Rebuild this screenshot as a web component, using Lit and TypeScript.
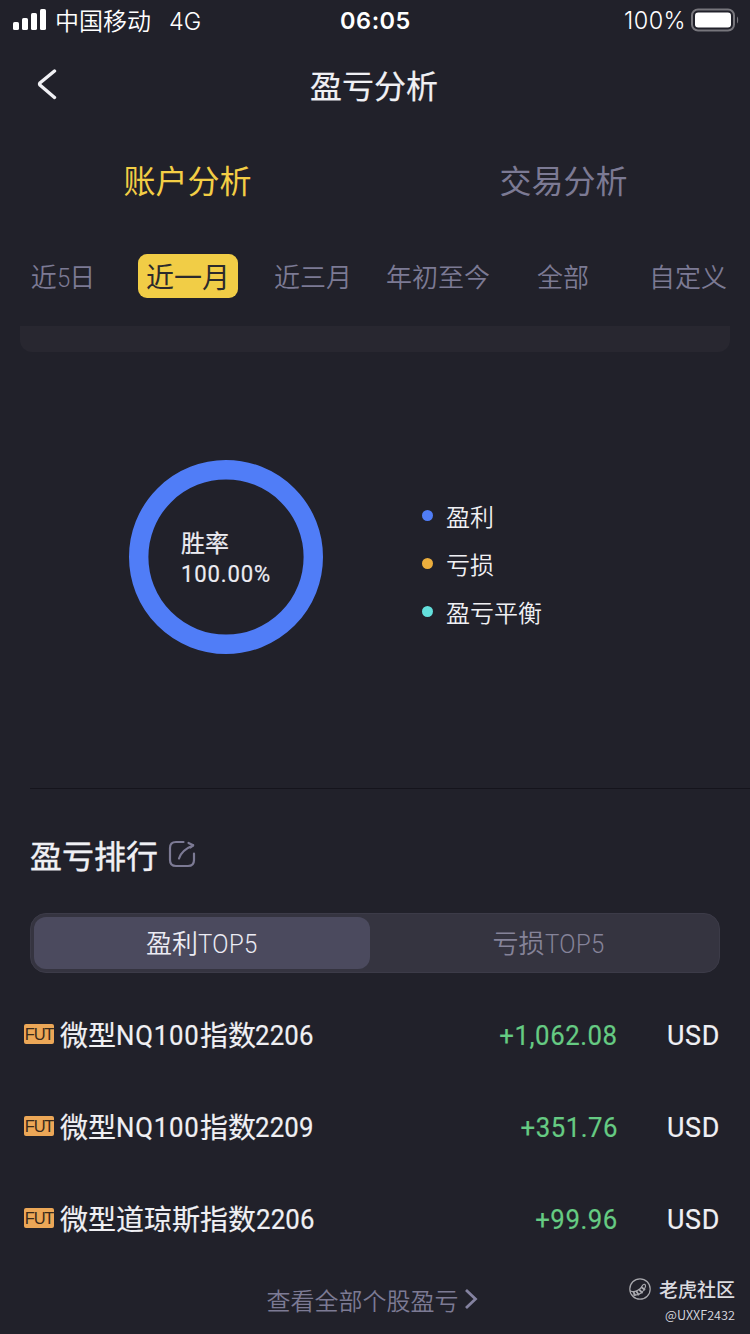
import { LitElement, html, css, svg } from "lit";
import { customElement, property, state } from "lit/decorators.js";
import { classMap } from "lit/directives/class-map.js";

interface Holding {
  name: Array<{ text: string; kind?: "code" | "month" }>;
  profit: string;
  currency: string;
}

const HOLDINGS: Holding[] = [
  {
    name: [{ text: "微型" }, { text: "NQ100", kind: "code" }, { text: "指数" }, { text: "2206", kind: "month" }],
    profit: "+1,062.08",
    currency: "USD",
  },
  {
    name: [{ text: "微型" }, { text: "NQ100", kind: "code" }, { text: "指数" }, { text: "2209", kind: "month" }],
    profit: "+351.76",
    currency: "USD",
  },
  {
    name: [{ text: "微型道琼斯指数" }, { text: "2206", kind: "month" }],
    profit: "+99.96",
    currency: "USD",
  },
];

@customElement("status-bar")
class StatusBar extends LitElement {
  static styles = css`
    :host {
      display: grid;
      grid-template-columns: 1fr auto 1fr;
      grid-template-rows: 40px;
      align-items: center;
      height: 40px;
      padding: 0 11px 0 13px;
      color: #fff;
      font: 400 24px/38px Inter, "Noto Sans CJK SC", sans-serif;
    }
    .left {
      display: flex;
      align-items: center;
    }
    .signal {
      width: 34px;
      height: 22px;
      margin-right: 8px;
    }
    .carrier {
      font-weight: 350;
      padding-top: 3px;
    }
    .network {
      margin-left: 18px;
      font-size: 23.5px;
      font-weight: 350;
      padding-top: 3px;
    }
    .time {
      font-weight: 600;
      font-size: 23.5px;
      letter-spacing: 0.5px;
      padding-top: 2px;
      margin-left: -1px;
    }
    .right {
      display: flex;
      align-items: center;
      justify-content: flex-end;
    }
    .percent {
      font-size: 23.5px;
      font-weight: 350;
      letter-spacing: 0.4px;
      margin-right: 5px;
      padding-top: 2px;
    }
    .battery {
      width: 48px;
      height: 24px;
    }
  `;

  render() {
    return html`
      <div class="left">
        <svg class="signal" viewBox="0 0 34 22" fill="#fff">
          <rect x="0" y="13" width="6" height="8" rx="1.6" />
          <rect x="9" y="9" width="6" height="12" rx="1.6" />
          <rect x="18" y="4" width="6" height="17" rx="1.6" />
          <rect x="27" y="0" width="6" height="21" rx="1.6" />
        </svg>
        <span class="carrier">中国移动</span>
        <span class="network">4G</span>
      </div>
      <span class="time">06:05</span>
      <div class="right">
        <span class="percent">100%</span>
        <svg class="battery" viewBox="0 0 48 24">
          <rect x="1" y="1.5" width="42" height="21" rx="6" fill="none" stroke="#77767c" stroke-width="2" />
          <rect x="4" y="4.5" width="36" height="15" rx="3.2" fill="#fff" />
          <path d="M46 8.5c1.6.9 1.6 6.100 0 7z" fill="#77767c" />
        </svg>
      </div>
    `;
  }
}

@customElement("win-rate-chart")
class WinRateChart extends LitElement {
  @property() label = "";
  @property() value = "";

  static styles = css`
    :host {
      display: grid;
      width: 194px;
      height: 194px;
    }
    .ring,
    .caption {
      grid-area: 1 / 1;
    }
    .caption {
      align-self: center;
      padding-left: 52px;
      color: #ececf2;
      font: 400 24px/30px "Noto Sans CJK SC", sans-serif;
      -webkit-text-stroke: 0.2px currentColor;
    }
    .value {
      padding-top: 2px;
      margin-bottom: -2px;
      font-family: Roboto, sans-serif;
      transform: scaleX(0.92);
      transform-origin: left;
      letter-spacing: 0.95px;
    }
  `;

  render() {
    return html`
      <svg class="ring" viewBox="0 0 194 194">
        ${svg`<circle cx="97" cy="97" r="87.3" fill="none" stroke="#507df7" stroke-width="19.4" />`}
      </svg>
      <div class="caption">
        <div>${this.label}</div>
        <div class="value">${this.value}</div>
      </div>
    `;
  }
}

@customElement("app-root")
class AppRoot extends LitElement {
  @state() private section = 0;
  @state() private period = 1;
  @state() private ranking = 0;

  static styles = css`
    :host {
      display: flex;
      flex-direction: column;
      position: relative;
      box-sizing: border-box;
      width: 750px;
      height: 1334px;
      overflow: hidden;
      background: #21212a;
      color: #f0f0f4;
      font-family: "Noto Sans CJK SC", sans-serif;
    }
    .latin {
      display: inline-block;
      font-family: Roboto, "Noto Sans CJK SC", sans-serif;
      transform: scaleX(0.92);
      transform-origin: left;
    }
    .nav {
      display: grid;
      grid-template-columns: 60px 1fr 60px;
      align-items: center;
      height: 92px;
      padding: 0 18px;
    }
    .back {
      width: 20px;
      height: 32px;
      margin: -4px 0 0 19px;
    }
    .title {
      text-align: center;
      font: 400 32px/88px "Noto Sans CJK SC", sans-serif;
      -webkit-text-stroke: 0.2px currentColor;
      height: 92px;
      margin-left: -2px;
    }
    .sections {
      display: grid;
      grid-template-columns: 375px 377px;
      height: 98px;
      text-align: center;
      font-size: 32px;
      line-height: 94px;
      color: #7c7a94;
      font-weight: 400;
    }
    .section.active {
      color: #f3ce45;
    }
    .periods {
      display: grid;
      grid-template-columns: repeat(6, 125px);
      align-items: center;
      height: 92px;
      padding-left: 0.5px;
    }
    .period {
      justify-self: center;
      height: 44px;
      padding: 0 8px;
      border-radius: 9px;
      color: #7c7a94;
      font-size: 26px;
      line-height: 44px;
      font-weight: 350;
      white-space: nowrap;
    }
    .period.active {
      background: #f1cd46;
      color: #2b2a2c;
      font-size: 28px;
      font-weight: 400;
    }
    .period .latin {
      margin-right: -2px;
      line-height: 40px;
    }
    .card-tail {
      height: 26px;
      margin: 4px 20px 0;
      border-radius: 0 0 12px 12px;
      background: #282730;
    }
    .overview {
      display: flex;
      align-items: center;
      box-sizing: border-box;
      height: 436px;
      padding: 0 0 26px 129px;
    }
    .legend {
      display: flex;
      flex-direction: column;
      margin: 14px 0 0 99px;
    }
    .entry {
      display: flex;
      align-items: center;
      gap: 13px;
      height: 48px;
      font-size: 24px;
      line-height: 46px;
      font-weight: 350;
    }
    .dot {
      width: 11px;
      height: 11px;
      border-radius: 50%;
      margin-top: -2px;
    }
    .blue {
      background: #507df7;
    }
    .amber {
      background: #ecae3d;
    }
    .teal {
      background: #63dfdc;
    }
    .divider {
      height: 1px;
      margin-left: 30px;
      background: #15141c;
    }
    .heading {
      display: flex;
      align-items: center;
      height: 124px;
      padding: 0 30px;
      font-size: 32px;
      line-height: 120px;
      font-weight: 400;
    }
    .heading-text {
      padding-top: 6px;
      -webkit-text-stroke: 0.4px currentColor;
    }
    .share {
      width: 28px;
      height: 28px;
      margin: 6px 0 0 10px;
    }
    .switch {
      display: grid;
      grid-template-columns: 336px 1fr;
      column-gap: 11px;
      box-sizing: border-box;
      height: 60px;
      margin: 0 30px;
      padding: 3px;
      border: 1px solid #3c3b48;
      border-radius: 16px;
      background: #353440;
      text-align: center;
      color: #858399;
      font-size: 26px;
      line-height: 50px;
      font-weight: 350;
    }
    .choice {
      height: 52px;
      border-radius: 12px;
    }
    .choice.active {
      background: #4b4a5e;
      color: #ececf4;
    }
    .switch .latin {
      letter-spacing: 0.4px;
      margin-right: -5px;
    }
    .list {
      display: flex;
      flex-direction: column;
      margin-top: 16px;
    }
    .row {
      display: grid;
      grid-template-columns: 30px 1fr auto 102px;
      align-items: center;
      height: 92px;
      padding: 0 31px 0 24px;
      font-size: 28px;
      line-height: 90px;
      font-weight: 400;
    }
    .tag {
      height: 20px;
      border-radius: 2px;
      background: #eca757;
      color: #3a2a1a;
      text-align: center;
      font: 400 16.5px/20px "Liberation Sans", sans-serif;
      letter-spacing: -1.2px;
      margin-top: -3px;
    }
    .name,
    .profit,
    .currency {
      -webkit-text-stroke: 0.2px currentColor;
    }
    .name {
      padding-left: 6px;
      white-space: nowrap;
    }
    .code {
      letter-spacing: 0.9px;
      margin-right: -7px;
      transform: translateY(-1px) scaleX(0.92);
    }
    .month {
      letter-spacing: 0.2px;
      margin-left: -0.5px;
      transform: translateY(-1px) scaleX(0.92);
    }
    .profit {
      color: #66cb83;
      letter-spacing: 0.6px;
      transform-origin: right;
      margin-right: -1px;
      padding-top: 1px;
    }
    .currency {
      text-align: right;
      letter-spacing: 0.7px;
      transform: scaleX(0.96);
      transform-origin: right;
      margin-right: -1px;
      padding-top: 1px;
    }
    .more {
      display: flex;
      align-items: center;
      justify-content: center;
      height: 69px;
      padding-right: 5px;
      color: #7c7a94;
      font-size: 24px;
      line-height: 69px;
      font-weight: 350;
    }
    .chevron {
      width: 14px;
      height: 22px;
      margin: -2px 1px 0 5px;
    }
    .watermark {
      position: absolute;
      right: 15px;
      bottom: 7px;
      display: grid;
      justify-items: end;
      color: #dcdce0;
    }
    .brand {
      display: flex;
      align-items: center;
      gap: 8px;
      font-size: 19px;
      line-height: 28px;
      font-weight: 500;
    }
    .logo {
      width: 22px;
      height: 22px;
    }
    .user {
      font: 350 12.7px/24px "Noto Sans CJK SC", sans-serif;
    }
  `;

  private renderLegend() {
    const entries = [
      ["blue", "盈利"],
      ["amber", "亏损"],
      ["teal", "盈亏平衡"],
    ];
    return entries.map(
      ([tone, text]) => html`<div class="entry"><i class="dot ${tone}"></i><span>${text}</span></div>`,
    );
  }

  private renderRow(item: Holding) {
    return html`
      <div class="row">
        <span class="tag">FUT</span>
        <span class="name">${item.name.map((part) => html`<span class=${part.kind ? `latin ${part.kind}` : ""}>${part.text}</span>`)}</span>
        <span class="latin profit">${item.profit}</span>
        <span class="latin currency">${item.currency}</span>
      </div>
    `;
  }

  render() {
    const periods = [html`近<span class="latin">5</span>日`, "近一月", "近三月", "年初至今", "全部", "自定义"];
    return html`
      <status-bar></status-bar>
      <header class="nav">
        <svg class="back" viewBox="0 0 20 32" fill="none" stroke="#f0f0f4" stroke-width="3.4" stroke-linecap="round" stroke-linejoin="round">
          <path d="M17.500 3L3.200 14.700Q2 16 3.200 17.300L17.500 29.500" />
        </svg>
        <div class="title">盈亏分析</div>
      </header>
      <div class="sections">
        ${["账户分析", "交易分析"].map(
          (text, i) => html`<div class=${classMap({ section: true, active: i === this.section })} @click=${() => (this.section = i)}>${text}</div>`,
        )}
      </div>
      <div class="periods">
        ${periods.map(
          (text, i) => html`<div class=${classMap({ period: true, active: i === this.period })} @click=${() => (this.period = i)}>${text}</div>`,
        )}
      </div>
      <div class="card-tail"></div>
      <section class="overview">
        <win-rate-chart label="胜率" value="100.00%"></win-rate-chart>
        <div class="legend">${this.renderLegend()}</div>
      </section>
      <div class="divider"></div>
      <div class="heading">
        <span class="heading-text">盈亏排行</span>
        <svg class="share" viewBox="0 0 28 28" fill="none" stroke="#7c7a94" stroke-width="2.200" stroke-linecap="round" stroke-linejoin="round">
          <path d="M15.500 2H8Q2 2 2 8V20Q2 26 8 26H20Q26 26 26 20V13.500" />
          <path d="M11 18.500C12.500 13.500 17.500 8.500 25 5.500" />
          <path d="M20.500 3L25.200 5.300L22.500 7.500" />
        </svg>
      </div>
      <div class="switch">
        ${["盈利", "亏损"].map(
          (text, i) => html`<div class=${classMap({ choice: true, active: i === this.ranking })} @click=${() => (this.ranking = i)}>${text}<span class="latin">TOP5</span></div>`,
        )}
      </div>
      <div class="list">${HOLDINGS.map((item) => this.renderRow(item))}</div>
      <div class="more">
        <span>查看全部个股盈亏</span>
        <svg class="chevron" viewBox="0 0 14 22" fill="none" stroke="#8482a0" stroke-width="2.800">
          <path d="M2 2L11.500 11L2 20" />
        </svg>
      </div>
      <div class="watermark">
        <div class="brand">
          <svg class="logo" viewBox="0 0 22 22" fill="none" stroke="#a9a9ae" stroke-width="1.200" stroke-linecap="round">
            <circle cx="11" cy="11" r="10.200" />
            <path d="M1.500 13C5 14.500 11 13 13.500 7.500C14.500 5.500 17 6 16.500 8.500C15.500 13.500 10 18 4 17" />
            <path d="M4.500 14L6 17M7.500 13.500L9.500 16.500M10.500 12L13 14.500M12.800 9.500L15.500 11.500" stroke-width="1.800" />
          </svg>
          <span>老虎社区</span>
        </div>
        <div class="user">@UXXF2432</div>
      </div>
    `;
  }
}
